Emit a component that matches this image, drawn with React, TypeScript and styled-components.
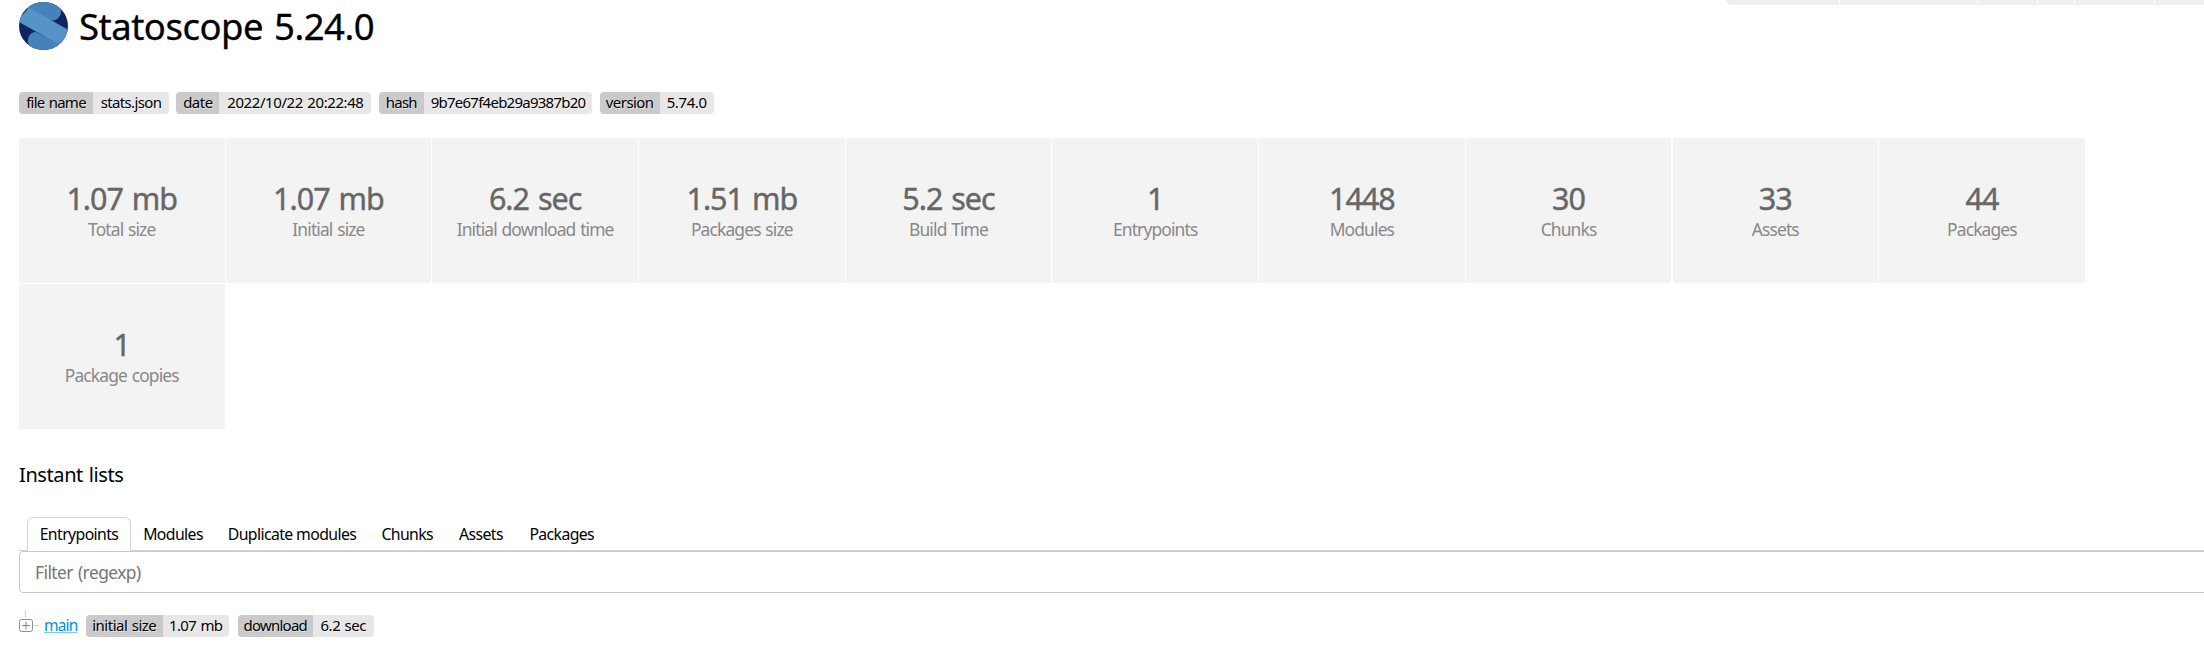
import React from "react";
import styled, { createGlobalStyle } from "styled-components";

const GlobalStyle = createGlobalStyle`
  * { box-sizing: border-box; }
  body {
    margin: 0;
    background: #fff;
    color: #000;
    font-family: "Noto Sans", "DejaVu Sans", sans-serif;
    overflow: hidden;
  }
`;

const Page = styled.main`
  height: 668px;
  padding-left: 19px;
  overflow: hidden;
  display: flex;
  flex-direction: column;
`;

const Toolbar = styled.nav`
  position: absolute;
  top: 0;
  right: 0;
  height: 5px;
  display: flex;
  gap: 1px;
  border-bottom-left-radius: 6px 5px;
  overflow: hidden;
`;

const ToolbarItem = styled.span<{ $w: number }>`
  width: ${(p) => p.$w}px;
  background: #efefef;
`;

const Header = styled.header`
  display: flex;
  align-items: center;
  height: 50px;
  padding-top: 2px;
  gap: 11px;
`;

const Logo = styled.svg`
  width: 49px;
  height: 48px;
  flex: none;
`;

const Title = styled.h1`
  margin: 0;
  font-size: 36.5px;
  font-weight: 400;
  line-height: 48px;
  letter-spacing: -0.5px;
  word-spacing: 2px;
  white-space: nowrap;
  -webkit-text-stroke: 0.3px;
`;

const Badges = styled.div<{ $gap: number }>`
  display: flex;
  gap: ${(p) => p.$gap}px;
`;

const Badge = styled.span`
  display: flex;
  height: 22px;
  border-radius: 4px;
  overflow: hidden;
  font-size: 15px;
  line-height: 20px;
  word-spacing: 1px;
  text-align: center;
  white-space: nowrap;
  text-shadow: 1px 1px rgba(255, 255, 255, 0.5);
`;

const BadgeLabel = styled.span<{ $w: number; $ls: number }>`
  width: ${(p) => p.$w}px;
  letter-spacing: ${(p) => p.$ls}px;
  background: #cacaca;
`;

const BadgeValue = styled(BadgeLabel)`
  background: #e7e7e7;
`;

const Cards = styled.section`
  display: flex;
  flex-wrap: wrap;
  gap: 1.4px 1.2px;
  width: 2068px;
  margin-top: 24px;
`;

const Card = styled.div`
  width: 205.5px;
  height: 145px;
  background: #f3f3f3;
  display: flex;
  flex-direction: column;
  align-items: center;
  padding-top: 42px;
  white-space: nowrap;
`;

const CardValue = styled.div`
  font-size: 30.5px;
  line-height: 36px;
  letter-spacing: -1px;
  word-spacing: 2px;
  color: #666;
  -webkit-text-stroke: 0.4px;
`;

const CardLabel = styled.div`
  font-size: 17.4px;
  line-height: 26px;
  letter-spacing: -0.85px;
  word-spacing: 1px;
  color: #888;
`;

const Heading = styled.h2`
  margin: 32px 0 0;
  font-size: 20px;
  font-weight: 400;
  line-height: 28px;
  letter-spacing: -0.4px;
  word-spacing: 1px;
`;

const Tabs = styled.div`
  display: flex;
  height: 34px;
  margin-top: 28px;
  padding-left: 8px;
  border-bottom: 1px solid #d4d4d4;
`;

const Tab = styled.button<{ $w: number; $active?: boolean }>`
  width: ${(p) => p.$w}px;
  height: 34px;
  padding: 0 0 2px;
  border: 1px solid ${(p) => (p.$active ? "#d4d4d4" : "transparent")};
  border-bottom: 0;
  border-radius: 6px 6px 0 0;
  background: ${(p) => (p.$active ? "#fff" : "transparent")};
  color: #000;
  font: 400 15.8px/30px "Noto Sans", sans-serif;
  letter-spacing: -0.6px;
  white-space: nowrap;
`;

const Filter = styled.input`
  width: calc(100% + 10px);
  flex: none;
  height: 42px;
  padding: 0 15px 1px;
  border: 1px solid #c8c8c8;
  border-radius: 4px;
  outline: none;
  background: #fff;
  font: 400 17.4px "Noto Sans", sans-serif;
  letter-spacing: -0.55px;
  word-spacing: 1px;
  &::placeholder { color: #757575; opacity: 1; }
`;

const TreeRow = styled.div`
  display: flex;
  height: 44px;
  padding-top: 16px;
`;

const Expander = styled.svg`
  width: 21px;
  height: 28px;
  flex: none;
`;

const EntryLink = styled.a`
  width: 33px;
  height: 17px;
  margin: 7px 9px 0 4px;
  border-bottom: 1px solid #80c7ee;
  color: #0090de;
  font-size: 15.5px;
  line-height: 18px;
  letter-spacing: -0.8px;
`;

const EntryBadges = styled(Badges)`
  padding-top: 6px;
`;

const InfoBadges = styled(Badges)`
  margin-top: 42px;
`;

type Part = { text: string; w: number; ls: number };

const info: [Part, Part][] = [
  [{ text: "file name", w: 74, ls: -0.75 }, { text: "stats.json", w: 76, ls: -0.65 }],
  [{ text: "date", w: 43, ls: -0.5 }, { text: "2022/10/22 20:22:48", w: 152, ls: -0.42 }],
  [{ text: "hash", w: 45, ls: -0.8 }, { text: "9b7e67f4eb29a9387b20", w: 168.5, ls: -0.75 }],
  [{ text: "version", w: 60, ls: -0.55 }, { text: "5.74.0", w: 54, ls: -0.4 }],
];

const entryInfo: [Part, Part][] = [
  [{ text: "initial size", w: 76.5, ls: -0.5 }, { text: "1.07 mb", w: 66.5, ls: -0.65 }],
  [{ text: "download", w: 75.5, ls: -0.75 }, { text: "6.2 sec", w: 60.5, ls: -0.5 }],
];

const stats = [
  ["1.07 mb", "Total size"],
  ["1.07 mb", "Initial size"],
  ["6.2 sec", "Initial download time"],
  ["1.51 mb", "Packages size"],
  ["5.2 sec", "Build Time"],
  ["1", "Entrypoints"],
  ["1448", "Modules"],
  ["30", "Chunks"],
  ["33", "Assets"],
  ["44", "Packages"],
  ["1", "Package copies"],
];

const tabs = [
  { text: "Entrypoints", w: 104 },
  { text: "Modules", w: 84 },
  { text: "Duplicate modules", w: 154 },
  { text: "Chunks", w: 76.5 },
  { text: "Assets", w: 71 },
  { text: "Packages", w: 90.5 },
];

const renderBadge = ([label, value]: [Part, Part]) => (
  <Badge key={label.text}>
    <BadgeLabel $w={label.w} $ls={label.ls}>{label.text}</BadgeLabel>
    <BadgeValue $w={value.w} $ls={value.ls}>{value.text}</BadgeValue>
  </Badge>
);

export default function App() {
  return (
    <>
      <GlobalStyle />
      <Page>
        <Toolbar>
          {[113, 137, 59, 36, 79, 49].map((w, i) => <ToolbarItem key={i} $w={w} />)}
        </Toolbar>
        <Header>
          <Logo viewBox="0 0 49 48" preserveAspectRatio="none">
            <defs>
              <clipPath id="disc"><ellipse cx="24.5" cy="24" rx="24.5" ry="24" /></clipPath>
            </defs>
            <g clipPath="url(#disc)">
              <rect width="49" height="48" fill="#11245f" />
              <path d="M8 6 L20 -4 H35 C42 3 44 11 40 15 C38 18 35 19 32 18.5 Z" fill="#4682b9" />
              <path d="M17 30 C10 30 7 38 10 43 L16 50 H35 L42 43 Z" fill="#4682b9" />
              <path d="M10 5.5 L52 29.5 L40 42.5 L-2 19 Z" fill="#5593c9" />
            </g>
          </Logo>
          <Title>Statoscope 5.24.0</Title>
        </Header>
        <InfoBadges $gap={7.4}>{info.map(renderBadge)}</InfoBadges>
        <Cards>
          {stats.map(([value, label]) => (
            <Card key={label}>
              <CardValue>{value}</CardValue>
              <CardLabel>{label}</CardLabel>
            </Card>
          ))}
        </Cards>
        <Heading>Instant lists</Heading>
        <Tabs>
          {tabs.map((t, i) => (
            <Tab key={t.text} $w={t.w} $active={i === 0}>{t.text}</Tab>
          ))}
        </Tabs>
        <Filter placeholder="Filter (regexp)" />
        <TreeRow>
          <Expander viewBox="0 0 21 28">
            <path d="M6.5 1v7M14 16.5h6" stroke="#d0d0d0" fill="none" />
            <rect x="0.5" y="10.5" width="13" height="12" rx="2" fill="#fff" stroke="#909090" />
            <path d="M3 16.5h8M7 12.5v8" stroke="#808080" fill="none" />
          </Expander>
          <EntryLink>main</EntryLink>
          <EntryBadges $gap={8.5}>{entryInfo.map(renderBadge)}</EntryBadges>
        </TreeRow>
      </Page>
    </>
  );
}
